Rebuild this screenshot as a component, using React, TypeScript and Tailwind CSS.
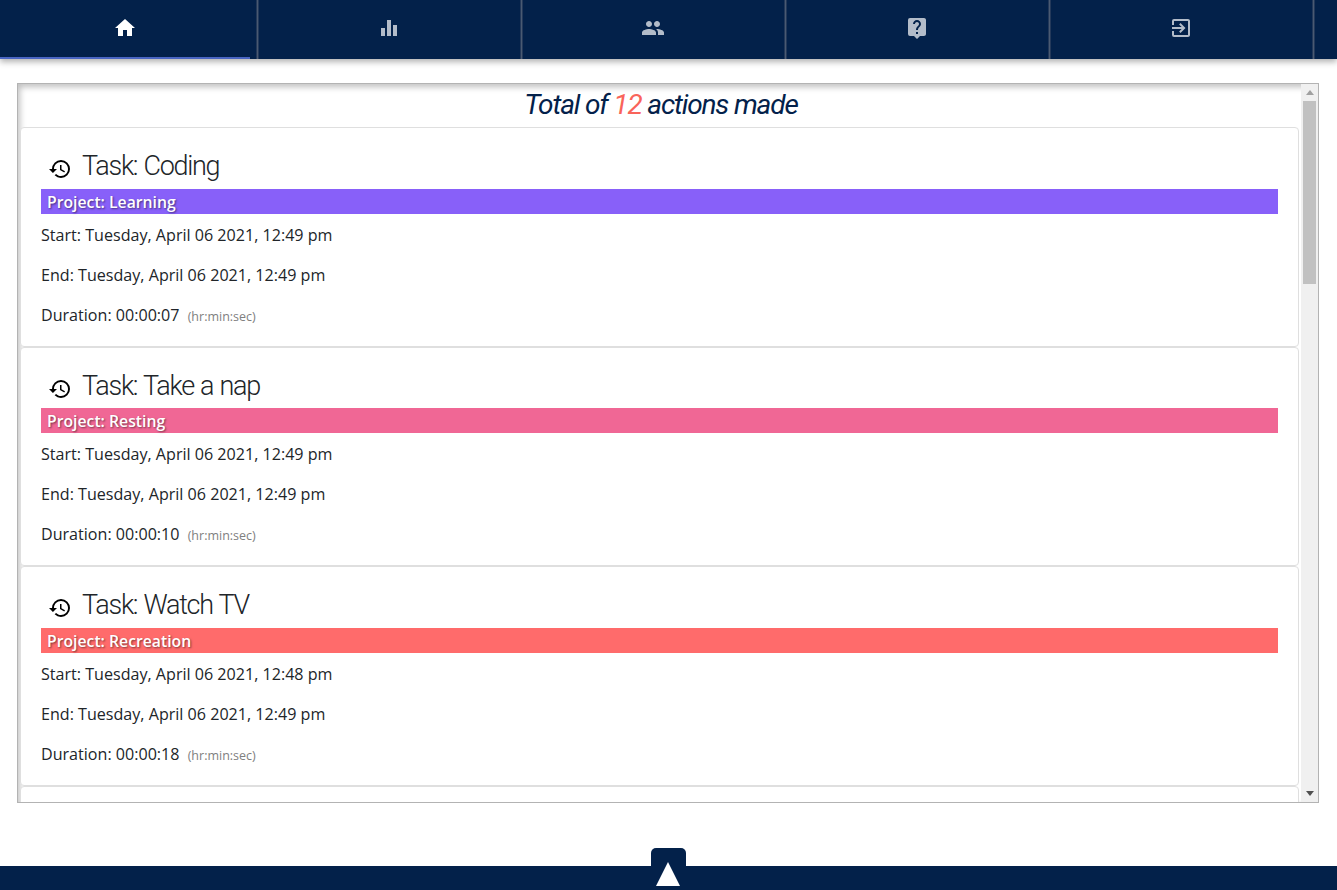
import { MdHome, MdEqualizer, MdPeople, MdLiveHelp, MdExitToApp, MdHistory } from "react-icons/md";

const tabs = [
  { Icon: MdHome, active: true },
  { Icon: MdEqualizer, active: false },
  { Icon: MdPeople, active: false },
  { Icon: MdLiveHelp, active: false },
  { Icon: MdExitToApp, active: false },
];

const cards = [
  { task: "Coding", project: "Learning", bar: "bg-[#8860f9]", start: "12:49", end: "12:49", dur: "00:00:07" },
  { task: "Take a nap", project: "Resting", bar: "bg-[#f06795]", start: "12:49", end: "12:49", dur: "00:00:10" },
  { task: "Watch TV", project: "Recreation", bar: "bg-[#ff6b6b]", start: "12:48", end: "12:49", dur: "00:00:18" },
];

export default function App() {
  return (
    <div className="relative flex h-[890px] w-[1337px] flex-col overflow-hidden bg-white font-['Open_Sans',sans-serif] text-[#212529]">
      <nav className="flex h-[59px] shrink-0 bg-[#03214a] shadow-[0_3px_6px_rgba(0,0,0,0.3)]">
        {tabs.map(({ Icon, active }, i) => (
          <div key={i} className="flex h-full w-[264px] shrink-0">
            <div className={`flex h-full w-[250px] shrink-0 items-center justify-center ${active ? "border-b-2 border-[#4a66c4] pb-[2px] pt-0 text-white" : "pb-[3px] text-white/70"}`}>
              <Icon size={24} />
            </div>
            <div className="ml-[6px] h-full w-[3px] border-x border-[#24395a] bg-[#4a5a72]" />
          </div>
        ))}
      </nav>

      <main className="mx-[17px] mt-[24px] flex h-[720px] w-[1302px] shrink-0 border border-[#b3b3b3] shadow-[inset_2px_3px_6px_rgba(0,0,0,0.25)]">
        <div className="flex-1 overflow-hidden pl-[2px] pr-[2px]">
          <h1 className="h-[43.1px] pl-[3px] text-center font-['Roboto',sans-serif] text-[28px] leading-[41px] font-normal tracking-[-1.15px] italic text-[#03214a]">
            Total of <span className="text-[#f9645a]">12</span> actions made
          </h1>
          {cards.map((c) => (
            <section key={c.task} className="h-[219.5px] rounded border border-[#dfdfdf] bg-white px-[20px] pt-[20px]">
              <h2 className="flex h-[40.8px] items-center pb-[4px] pl-[7px] font-['Roboto',sans-serif] text-[27px] font-light tracking-[-1.3px] [word-spacing:1px] text-[#212529]">
                <MdHistory size={24} className="mt-[6px] mr-[10px] text-black" />
                Task: {c.task}
              </h2>
              <div className={`h-[25px] pt-[1px] pl-[6px] text-[15.75px] leading-[24px] font-semibold text-white [text-shadow:1px_1px_2px_rgba(0,0,0,0.5)] ${c.bar}`}>
                Project: {c.project}
              </div>
              <p className="mt-[9px] text-[16.1px] leading-[24px]">Start: Tuesday, April 06 2021, {c.start} pm</p>
              <p className="mt-[16px] text-[16.1px] leading-[24px]">End: Tuesday, April 06 2021, {c.end} pm</p>
              <p className="mt-[16px] text-[16.1px] leading-[24px]">
                Duration: {c.dur} <span className="ml-[4px] text-[12.5px] text-[#808080]">(hr:min:sec)</span>
              </p>
            </section>
          ))}
          <section className="h-[40px] rounded border border-[#dfdfdf] bg-white" />
        </div>
        <div className="relative flex w-[17px] shrink-0 flex-col items-center bg-[#f0f0f0]">
          <div className="mt-[6px] h-0 w-0 border-x-[4px] border-b-[5px] border-x-transparent border-b-[#a0a0a0]" />
          <div className="mt-[6px] h-[183px] w-[13px] bg-[#c1c1c1]" />
          <div className="mt-auto mb-[6px] h-0 w-0 border-x-[4px] border-t-[5px] border-x-transparent border-t-[#505050]" />
        </div>
      </main>

      <footer className="relative mt-auto h-[24px] shrink-0 bg-[#03214a]">
        <div className="absolute bottom-0 left-[651px] flex h-[42px] w-[35px] items-end justify-center rounded-t-[5px] bg-[#03214a] pr-[1px] pb-[4px]">
          <div className="h-0 w-0 border-x-[12px] border-b-[24px] border-x-transparent border-b-white" />
        </div>
      </footer>
    </div>
  );
}
